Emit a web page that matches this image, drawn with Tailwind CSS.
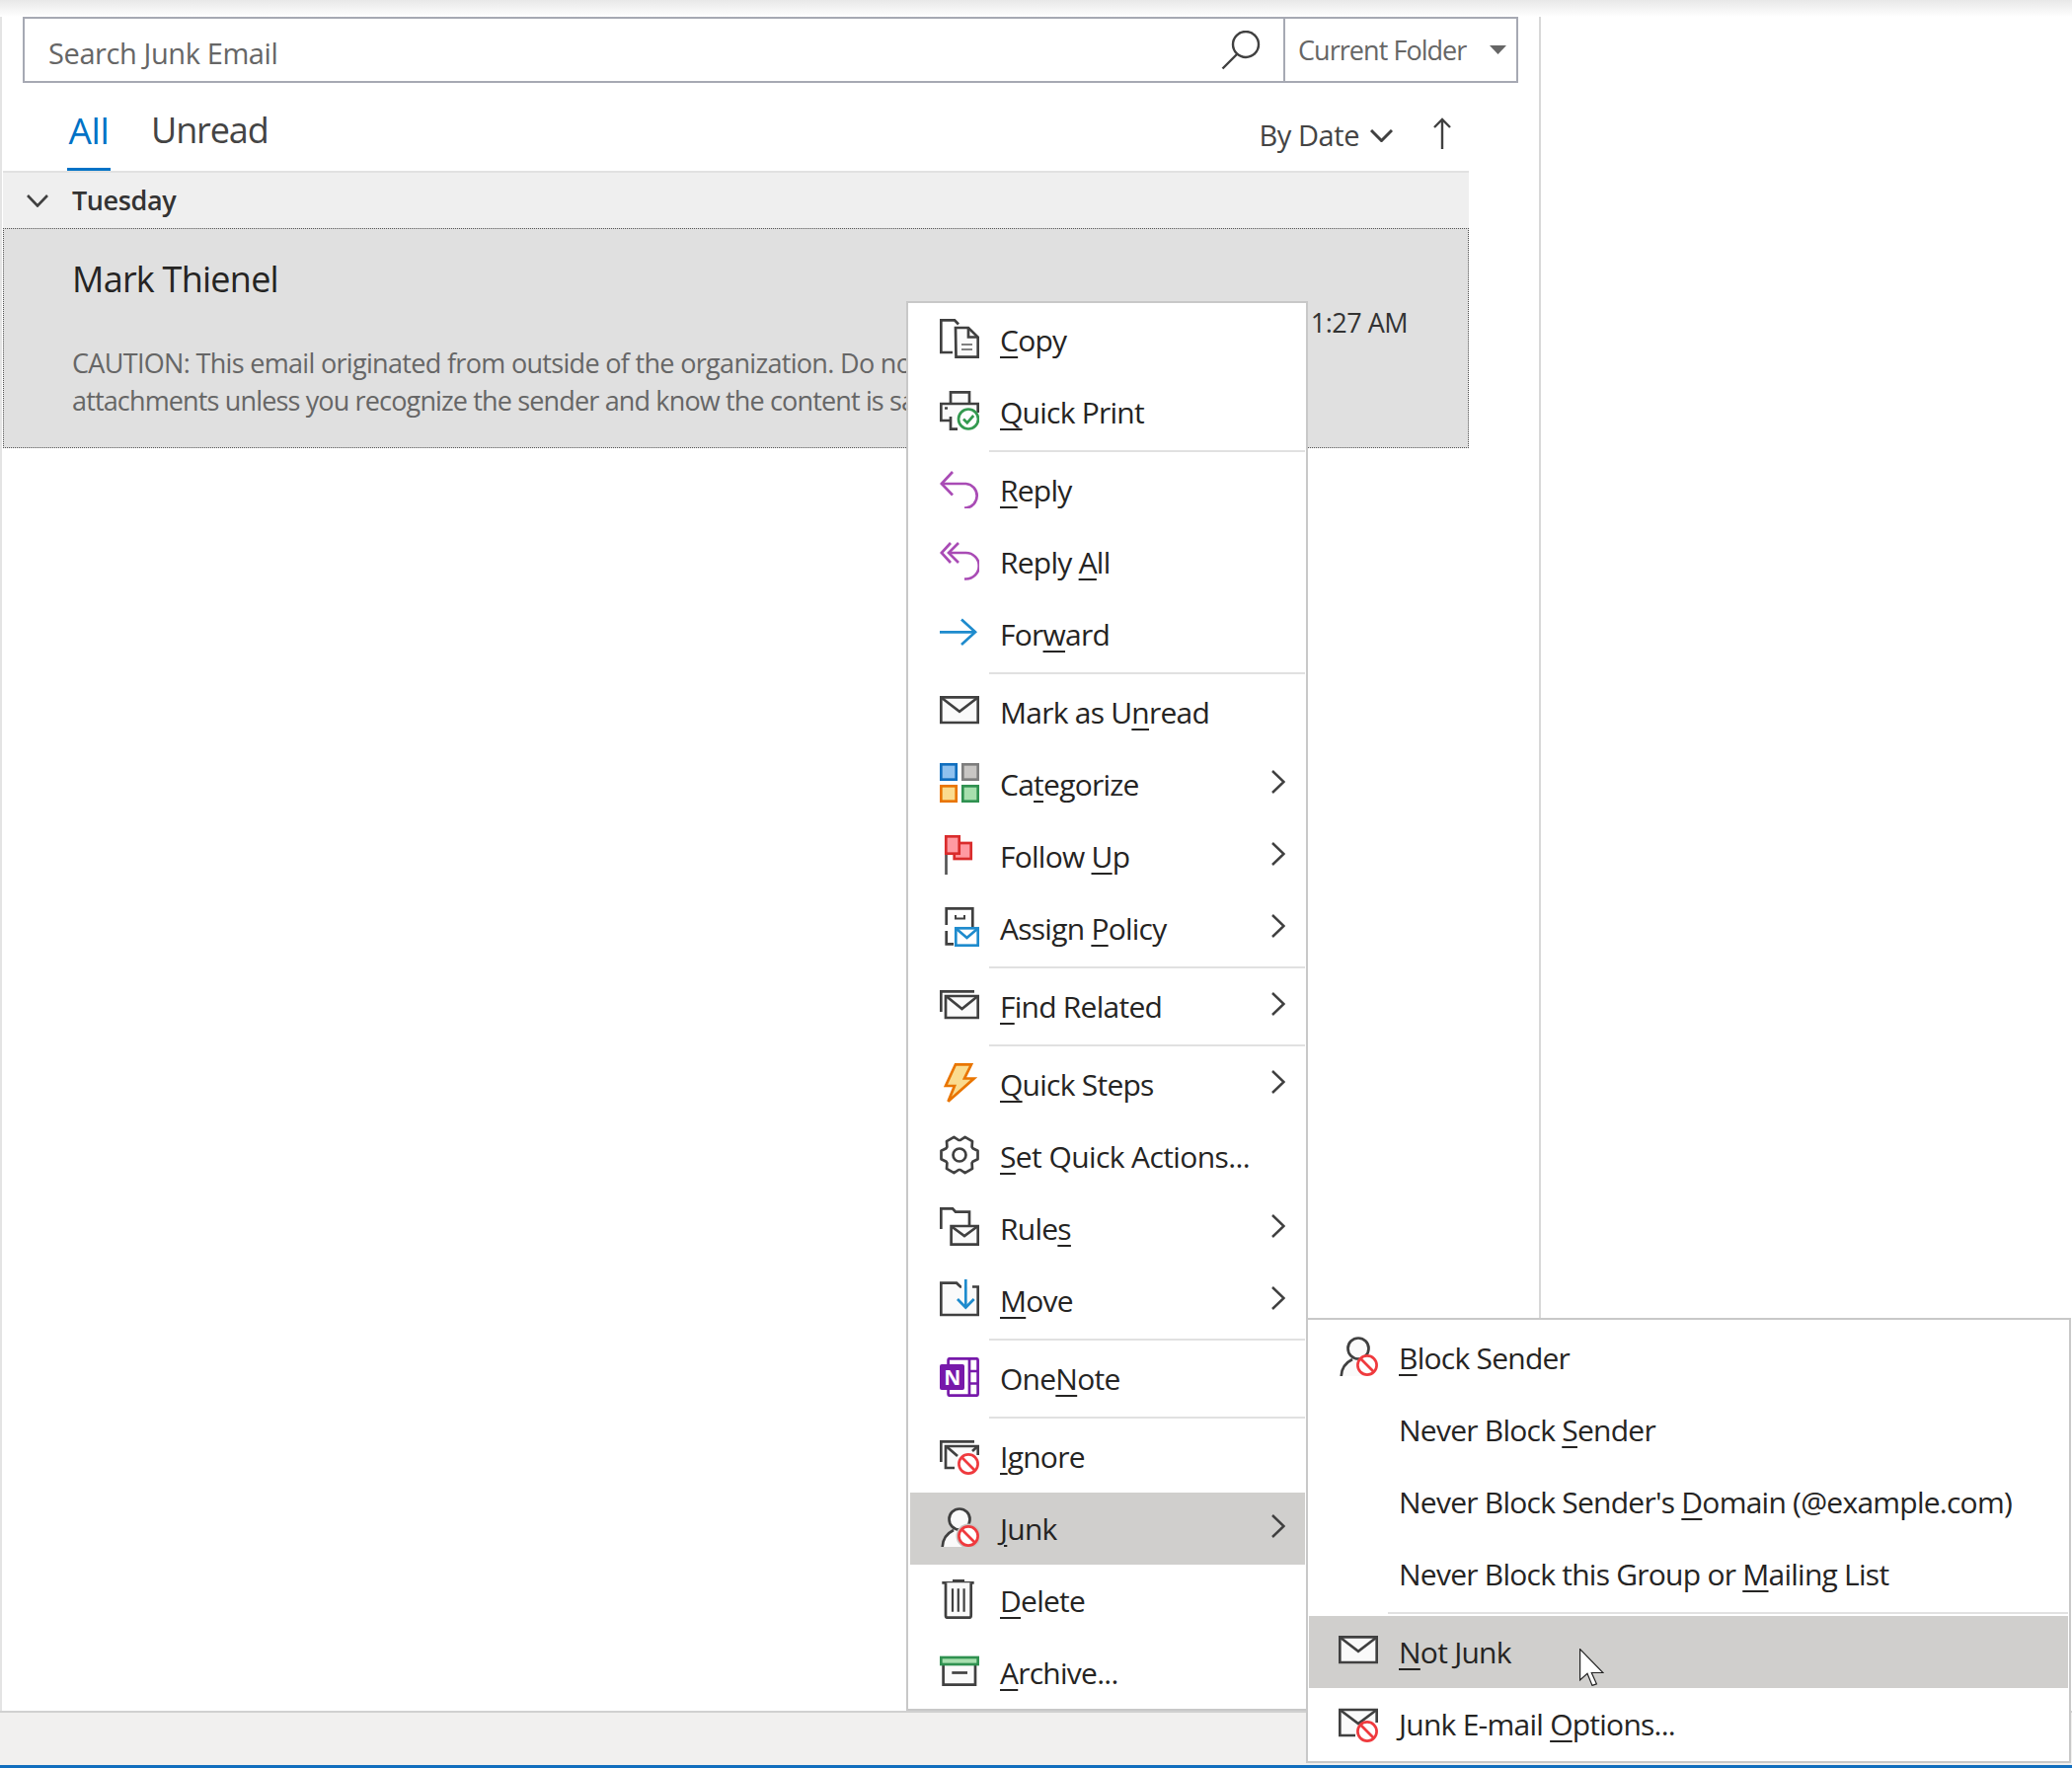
<!DOCTYPE html>
<html lang="en">

<head>
    <meta charset="UTF-8">
    <title>Junk Email</title>
    <script src="https://cdn.jsdelivr.net/npm/@tailwindcss/browser@4"></script>
</head>

<body class="relative w-[2099px] h-[1791px] overflow-hidden bg-white flex flex-col font-['Open_Sans',sans-serif] text-[#252423]">

    <!-- top shadow -->
    <div class="h-[17px] shrink-0 bg-gradient-to-b from-[#e8e8e8] to-white"></div>

    <!-- list pane -->
    <div class="flex-1 min-h-0 w-[1561px] border-l-2 border-r-2 border-l-[#e4e4e4] border-r-[#d8d8d8]">

        <!-- search -->
        <div class="ml-[21px] w-[1515px] h-[67px] flex border-2 border-[#a6a9b3]">
            <div class="flex-1 flex items-center pl-[24px] pr-[23px]">
                <span class="text-[29px] text-[#666666] tracking-[-0.4px] pt-[6px]">Search Junk Email</span>
                <svg class="ml-auto w-10 h-10" viewBox="0 0 40 40" fill="none" stroke="#404040" stroke-width="2.4"><circle cx="25" cy="14" r="13"/><path d="M16 24L1.5 38.5"/></svg>
            </div>
            <div class="w-[236px] flex items-center border-l-2 border-[#a6a9b3] pl-[13px] text-[#666666]">
                <span class="text-[27px] tracking-[-0.95px] pt-[2px]">Current Folder</span>
                <svg class="ml-auto mr-[10px] w-[17px] h-[9px]" viewBox="0 0 17 9"><path d="M0 0H17L8.5 9Z" fill="#666666"/></svg>
            </div>
        </div>

        <!-- tabs -->
        <div class="h-[89px] w-[1485px] flex pl-[66px] pr-[16px]">
            <div class="w-[44px] flex flex-col items-center border-b-[3px] border-[#0072c6] text-[#0072c6]">
                <span class="text-[37px] leading-[50px] pt-[23px] tracking-[-0.4px]">All</span>
            </div>
            <span class="ml-[41px] text-[36px] leading-[50px] pt-[23px] text-[#444444] tracking-[-1.1px]">Unread</span>
            <div class="ml-auto flex items-center pt-[16px] text-[#444444]">
                <span class="text-[29px] tracking-[-0.45px]">By Date</span>
                <svg class="ml-[11px] w-[23px] h-[13px] mt-[2px]" viewBox="0 0 23 13" fill="none" stroke="#404040" stroke-width="3"><path d="M1 1L11.5 11.5L22 1"/></svg>
                <svg class="ml-[40px] w-[20px] h-[32px] -mt-[3px]" viewBox="0 0 20 32" fill="none" stroke="#404040" stroke-width="2.4"><path d="M10 32V2M2 10L10 2L18 10"/></svg>
            </div>
        </div>

        <!-- message list -->
        <div class="ml-[1px] w-[1485px]">
            <div class="h-[58px] border-t-2 border-[#e1e1e1] bg-[#efefef] flex items-center">
                <svg class="ml-[24px] w-[22px] h-[13px]" viewBox="0 0 22 13" fill="none" stroke="#404040" stroke-width="2.6"><path d="M1 1L11 11.5L21 1"/></svg>
                <span class="ml-[24px] text-[27px] font-semibold tracking-[-0.4px] text-[#333333]">Tuesday</span>
            </div>
            <div class="h-[223px] border border-dotted border-[#555555] bg-[#e0e0e0] flex flex-col pl-[69px] pt-[26px]">
                <div class="text-[36px] leading-[49px] tracking-[-0.75px] text-[#252423]">Mark Thienel</div>
                <div class="text-[27px] leading-[40px] text-right pr-[61px] tracking-[-0.5px] text-[#333333]">1:27 AM</div>
                <div class="mt-[2px] text-[27px] leading-[38px] text-[#666666] whitespace-nowrap">
                    <div class="tracking-[-0.68px]">CAUTION: This email originated from outside of the organization. Do not click</div>
                    <div class="tracking-[-0.85px]">attachments unless you recognize the sender and know the content is safe.</div>
                </div>
            </div>
        </div>
    </div>

    <!-- status bar -->
    <div class="h-[55px] shrink-0 border-t-2 border-[#d0d0d0] bg-[#f1f0ef]"></div>
    <div class="h-[3px] shrink-0 bg-[#106ebe]"></div>

    <!-- context menu -->
    <div class="absolute left-[918px] top-[305px] w-[407px] h-[1428px] border-2 border-[#c8c8c8] bg-white pt-[1px] pl-[2px] pr-[1px] text-[30px] tracking-[-0.75px]">

        <div class="flex items-center h-[73px]">
            <svg class="self-start mt-[15px] ml-[30px] w-10 h-10" viewBox="0 0 40 40" fill="none" stroke="#404040" stroke-width="2.7"><path d="M13 34H1.3V1.3H15L19 5.5"/><path d="M16 9H29L38.7 18.5V38.7H16.5Z" fill="#fafafa"/><path d="M29 9V18.5H38.7"/><path d="M22 26H33M22 31H33" stroke="#808080" stroke-width="2"/></svg>
            <span class="ml-[21px]"><u class="underline decoration-2 underline-offset-[5px]">C</u>opy</span>
        </div>
        <div class="flex items-center h-[73px]">
            <svg class="self-start mt-[15px] ml-[30px] w-10 h-10" viewBox="0 0 40 40" fill="none" stroke="#404040" stroke-width="2.7"><path d="M11 13V1.3H30V13" fill="#fafafa"/><path d="M10 30H1.3V13H38.7V22" fill="#fafafa"/><path d="M11 26V38.7H18"/><path d="M5 17.5H8" stroke-width="2.4"/><circle cx="29" cy="28.5" r="10" fill="#fff" stroke="#339a4f"/><path d="M24 28.5L27.8 32.3L34.2 25" stroke="#339a4f"/></svg>
            <span class="ml-[21px]"><u class="underline decoration-2 underline-offset-[5px]">Q</u>uick Print</span>
        </div>
        <div class="h-[6px] flex items-center pl-[80px]"><div class="h-[2px] w-full bg-[#e1e1e1]"></div></div>

        <div class="flex items-center h-[73px]">
            <svg class="self-start mt-[15px] ml-[30px] w-10 h-10" viewBox="0 0 40 40" fill="none" stroke="#a94bb5" stroke-width="2.7"><path d="M13 3L1.8 15L13 26.5"/><path d="M1.8 15H26.5A12.3 12.3 0 0 1 26.5 39.5H25"/></svg>
            <span class="ml-[21px]"><u class="underline decoration-2 underline-offset-[5px]">R</u>eply</span>
        </div>
        <div class="flex items-center h-[73px]">
            <svg class="self-start mt-[15px] ml-[30px] w-10 h-10" viewBox="0 0 40 40" fill="none" stroke="#a94bb5" stroke-width="2.7"><path d="M11 2L1.8 12L11 22"/><path d="M19 2L9 12L19 22"/><path d="M9 12H26.5A13 13 0 0 1 26.5 38.5H25"/></svg>
            <span class="ml-[21px]">Reply <u class="underline decoration-2 underline-offset-[5px]">A</u>ll</span>
        </div>
        <div class="flex items-center h-[73px]">
            <svg class="self-start mt-[15px] ml-[30px] w-10 h-10" viewBox="0 0 40 40" fill="none" stroke="#1e8bcd" stroke-width="2.7"><path d="M0 19.3H36"/><path d="M22 6.5L36 19.3L22 32"/></svg>
            <span class="ml-[21px]">For<u class="underline decoration-2 underline-offset-[5px]">w</u>ard</span>
        </div>
        <div class="h-[6px] flex items-center pl-[80px]"><div class="h-[2px] w-full bg-[#e1e1e1]"></div></div>

        <div class="flex items-center h-[73px]">
            <svg class="self-start mt-[15px] ml-[30px] w-10 h-10" viewBox="0 0 40 40" fill="none" stroke="#404040" stroke-width="2.7"><path d="M1.3 6.3H38.7V32H1.3Z" fill="#fafafa"/><path d="M2 7L20 20.7L38 7"/></svg>
            <span class="ml-[21px]">Mark as U<u class="underline decoration-2 underline-offset-[5px]">n</u>read</span>
        </div>
        <div class="flex items-center h-[73px]">
            <svg class="self-start mt-[15px] ml-[30px] w-10 h-10" viewBox="0 0 40 40" stroke-width="2.7"><rect x="1.3" y="1.3" width="15.4" height="15.4" fill="#8fc1ee" stroke="#106ebe"/><rect x="23.3" y="1.3" width="15.4" height="15.4" fill="#c8c6c4" stroke="#7d7d7d"/><rect x="1.3" y="23.3" width="15.4" height="15.4" fill="#fadb8f" stroke="#e97500"/><rect x="23.3" y="23.3" width="15.4" height="15.4" fill="#a7dfae" stroke="#2f9150"/></svg>
            <span class="ml-[21px]">Ca<u class="underline decoration-2 underline-offset-[5px]">t</u>egorize</span>
            <svg class="ml-auto mr-[20px] -mt-[6px] w-[14px] h-[24px]" viewBox="0 0 14 24" fill="none" stroke="#404040" stroke-width="2.5"><path d="M1 1L12.5 12L1 23"/></svg>
        </div>
        <div class="flex items-center h-[73px]">
            <svg class="self-start mt-[15px] ml-[30px] w-10 h-10" viewBox="0 0 40 40" fill="none" stroke-width="2.7"><path d="M6.5 19V40" stroke="#555555"/><rect x="14.7" y="8" width="17" height="16" fill="#ff9aa2" stroke="#d92c2c"/><rect x="6.3" y="1.3" width="13.4" height="17.4" fill="#ff9aa2" stroke="#d92c2c"/></svg>
            <span class="ml-[21px]">Follow <u class="underline decoration-2 underline-offset-[5px]">U</u>p</span>
            <svg class="ml-auto mr-[20px] -mt-[6px] w-[14px] h-[24px]" viewBox="0 0 14 24" fill="none" stroke="#404040" stroke-width="2.5"><path d="M1 1L12.5 12L1 23"/></svg>
        </div>
        <div class="flex items-center h-[73px]">
            <svg class="self-start mt-[15px] ml-[30px] w-10 h-10" viewBox="0 0 40 40" fill="none" stroke="#404040" stroke-width="2.7"><path d="M6.7 18V1.3H33.3V20"/><path d="M6.7 24V37.3H14"/><path d="M16 8V11.5H25V8" stroke-width="2"/><rect x="16.3" y="21.3" width="22.4" height="17.4" fill="#fff" stroke="#1e8bcd"/><path d="M17 22L27.5 31L38 22" stroke="#1e8bcd"/></svg>
            <span class="ml-[21px]">Assign <u class="underline decoration-2 underline-offset-[5px]">P</u>olicy</span>
            <svg class="ml-auto mr-[20px] -mt-[6px] w-[14px] h-[24px]" viewBox="0 0 14 24" fill="none" stroke="#404040" stroke-width="2.5"><path d="M1 1L12.5 12L1 23"/></svg>
        </div>
        <div class="h-[6px] flex items-center pl-[80px]"><div class="h-[2px] w-full bg-[#e1e1e1]"></div></div>

        <div class="flex items-center h-[73px]">
            <svg class="self-start mt-[15px] ml-[30px] w-10 h-10" viewBox="0 0 40 40" fill="none" stroke="#404040" stroke-width="2.7"><path d="M1.3 27V6.3H35"/><path d="M6 11H38.7V33H6Z" fill="#fafafa"/><path d="M7 11.5L22.5 24L38 11.5"/></svg>
            <span class="ml-[21px]"><u class="underline decoration-2 underline-offset-[5px]">F</u>ind Related</span>
            <svg class="ml-auto mr-[20px] -mt-[6px] w-[14px] h-[24px]" viewBox="0 0 14 24" fill="none" stroke="#404040" stroke-width="2.5"><path d="M1 1L12.5 12L1 23"/></svg>
        </div>
        <div class="h-[6px] flex items-center pl-[80px]"><div class="h-[2px] w-full bg-[#e1e1e1]"></div></div>

        <div class="flex items-center h-[73px]">
            <svg class="self-start mt-[15px] ml-[30px] w-10 h-10" viewBox="0 0 40 40" fill="#fadb8f" stroke="#e97500" stroke-width="2.7"><path d="M16 1.3H32L25 15.5H34.7L8.5 38.7L15 23H6Z"/></svg>
            <span class="ml-[21px]"><u class="underline decoration-2 underline-offset-[5px]">Q</u>uick Steps</span>
            <svg class="ml-auto mr-[20px] -mt-[6px] w-[14px] h-[24px]" viewBox="0 0 14 24" fill="none" stroke="#404040" stroke-width="2.5"><path d="M1 1L12.5 12L1 23"/></svg>
        </div>
        <div class="flex items-center h-[73px]">
            <svg class="self-start mt-[15px] ml-[30px] w-10 h-10" viewBox="0 0 40 40" fill="none" stroke="#404040" stroke-width="2.7" stroke-linejoin="round"><path d="M38.5 15.7L38.5 24.3L33.4 26.8L32.6 28.2L33 33.9L25.6 38.2L20.8 35L19.2 35L14.4 38.2L7 33.9L7.4 28.2L6.6 26.8L1.5 24.3L1.5 15.7L6.6 13.2L7.4 11.8L7 6.1L14.4 1.8L19.2 5L20.8 5L25.6 1.8L33 6.1L32.6 11.8L33.4 13.2Z"/><circle cx="20" cy="20" r="6.5"/></svg>
            <span class="ml-[21px] tracking-[-0.6px]"><u class="underline decoration-2 underline-offset-[5px]">S</u>et Quick Actions...</span>
        </div>
        <div class="flex items-center h-[73px]">
            <svg class="self-start mt-[15px] ml-[30px] w-10 h-10" viewBox="0 0 40 40" fill="none" stroke="#404040" stroke-width="2.7"><path d="M1.3 22V1.3H13L16 4.7H30V18"/><path d="M11.6 19H38.7V37.7H11.6Z" fill="#fafafa"/><path d="M12 19.5L25 29L38 19.5"/></svg>
            <span class="ml-[21px]">Rule<u class="underline decoration-2 underline-offset-[5px]">s</u></span>
            <svg class="ml-auto mr-[20px] -mt-[6px] w-[14px] h-[24px]" viewBox="0 0 14 24" fill="none" stroke="#404040" stroke-width="2.5"><path d="M1 1L12.5 12L1 23"/></svg>
        </div>
        <div class="flex items-center h-[73px]">
            <svg class="self-start mt-[15px] ml-[30px] w-10 h-10" viewBox="0 0 40 40" fill="none" stroke="#404040" stroke-width="2.7"><path d="M22 7.5H21L17 3.7H1.3V36H38.7V7.5H33" fill="#fafafa"/><path d="M26.3 0V28.5" stroke="#1e8bcd"/><path d="M18 20L26.3 28.5L34.7 20" stroke="#1e8bcd"/></svg>
            <span class="ml-[21px]"><u class="underline decoration-2 underline-offset-[5px]">M</u>ove</span>
            <svg class="ml-auto mr-[20px] -mt-[6px] w-[14px] h-[24px]" viewBox="0 0 14 24" fill="none" stroke="#404040" stroke-width="2.5"><path d="M1 1L12.5 12L1 23"/></svg>
        </div>
        <div class="h-[6px] flex items-center pl-[80px]"><div class="h-[2px] w-full bg-[#e1e1e1]"></div></div>

        <div class="flex items-center h-[73px]">
            <svg class="self-start mt-[15px] ml-[30px] w-10 h-10" viewBox="0 0 40 40" fill="none" stroke="#7719aa" stroke-width="2.7"><rect x="8.6" y="1.3" width="30" height="37.4" rx="1.5" fill="#fff"/><path d="M30 1.3V38.7M30 14H38.7M30 26.5H38.7"/><rect x="0" y="7" width="25" height="26" rx="2" fill="#7719aa" stroke="none"/><text x="12.5" y="27.5" text-anchor="middle" font-family="Open Sans" font-weight="700" font-size="21" fill="#fff" stroke="none">N</text></svg>
            <span class="ml-[21px]">One<u class="underline decoration-2 underline-offset-[5px]">N</u>ote</span>
        </div>
        <div class="h-[6px] flex items-center pl-[80px]"><div class="h-[2px] w-full bg-[#e1e1e1]"></div></div>

        <div class="flex items-center h-[73px]">
            <svg class="self-start mt-[15px] ml-[30px] w-10 h-10" viewBox="0 0 40 40" fill="none" stroke="#404040" stroke-width="2.7"><path d="M1.3 27V6.3H35"/><path d="M15 33H6V11H38.7V20" fill="#fafafa"/><path d="M7 11.5L18 21M38 11.5L33 16"/><circle cx="29" cy="29" r="9.6" fill="#fff" stroke="#ef3a3e"/><path d="M22.3 22.3L35.7 35.7" stroke="#ef3a3e"/></svg>
            <span class="ml-[21px]"><u class="underline decoration-2 underline-offset-[5px]">I</u>gnore</span>
        </div>
        <div class="flex items-center h-[73px] bg-[#d0cfcd]">
            <svg class="self-start mt-[15px] ml-[30px] w-10 h-10" viewBox="0 0 40 40" fill="none" stroke="#404040" stroke-width="2.7"><path d="M2.7 40C3 31 8 26 14 23M14 23C24 25 30 30 32 40H2.7" fill="#fafafa" stroke="none"/><path d="M2.7 40C3 31 8 26 14 23"/><circle cx="20" cy="12" r="10.5" fill="#fafafa"/><circle cx="29" cy="29" r="12.5" fill="#c8c6c4" stroke="none"/><circle cx="29" cy="29" r="9.6" fill="#fff" stroke="#ef3a3e"/><path d="M22.3 22.3L35.7 35.7" stroke="#ef3a3e"/></svg>
            <span class="ml-[21px]"><u class="underline decoration-2 underline-offset-[5px]">J</u>unk</span>
            <svg class="ml-auto mr-[20px] -mt-[6px] w-[14px] h-[24px]" viewBox="0 0 14 24" fill="none" stroke="#404040" stroke-width="2.5"><path d="M1 1L12.5 12L1 23"/></svg>
        </div>
        <div class="flex items-center h-[73px]">
            <svg class="self-start mt-[15px] ml-[30px] w-10 h-10" viewBox="0 0 40 40" fill="none" stroke="#404040" stroke-width="2.7"><path d="M2.3 3.3H34.7"/><path d="M13 1.5H25" stroke-width="3"/><path d="M6 3.3V36.5Q6 38.7 8 38.7H29.5Q31.7 38.7 31.7 36.5V3.3" fill="#fafafa"/><path d="M13 9.3V32.7M18.8 9.3V32.7M24.6 9.3V32.7" stroke-width="2.2"/></svg>
            <span class="ml-[21px]"><u class="underline decoration-2 underline-offset-[5px]">D</u>elete</span>
        </div>
        <div class="flex items-center h-[73px]">
            <svg class="self-start mt-[15px] ml-[30px] w-10 h-10" viewBox="0 0 40 40" fill="none" stroke="#404040" stroke-width="2.7"><path d="M3.6 13V33.7H36V13" fill="#fafafa"/><rect x="1.3" y="6" width="37.4" height="7" fill="#a7dfae" stroke="#2f9150"/><path d="M12.3 21.5H28"/></svg>
            <span class="ml-[21px]"><u class="underline decoration-2 underline-offset-[5px]">A</u>rchive...</span>
        </div>
    </div>

    <!-- junk submenu -->
    <div class="absolute left-[1323px] top-[1335px] w-[775px] h-[451px] border-2 border-[#c8c8c8] bg-white pt-[2px] pl-[1px] pr-[1px] text-[30px] tracking-[-0.75px]">
        <div class="flex items-center h-[73px]">
            <svg class="self-start mt-[15px] ml-[30px] w-10 h-10" viewBox="0 0 40 40" fill="none" stroke="#404040" stroke-width="2.7"><path d="M2.7 40C3 31 8 26 14 23M14 23C24 25 30 30 32 40H2.7" fill="#fafafa" stroke="none"/><path d="M2.7 40C3 31 8 26 14 23"/><circle cx="20" cy="12" r="10.5" fill="#fafafa"/><circle cx="29" cy="29" r="9.6" fill="#fff" stroke="#ef3a3e"/><path d="M22.3 22.3L35.7 35.7" stroke="#ef3a3e"/></svg>
            <span class="ml-[21px]"><u class="underline decoration-2 underline-offset-[5px]">B</u>lock Sender</span>
        </div>
        <div class="flex items-center h-[73px] pl-[91px]">
            <span>Never Block <u class="underline decoration-2 underline-offset-[5px]">S</u>ender</span>
        </div>
        <div class="flex items-center h-[73px] pl-[91px]">
            <span>Never Block Sender's <u class="underline decoration-2 underline-offset-[5px]">D</u>omain (@example.com)</span>
        </div>
        <div class="flex items-center h-[73px] pl-[91px]">
            <span>Never Block this Group or <u class="underline decoration-2 underline-offset-[5px]">M</u>ailing List</span>
        </div>
        <div class="h-[6px] flex items-center pl-[80px]"><div class="h-[2px] w-full bg-[#e1e1e1]"></div></div>
        <div class="flex items-center h-[73px] bg-[#d0cfcd]">
            <svg class="self-start mt-[15px] ml-[30px] w-10 h-10" viewBox="0 0 40 40" fill="none" stroke="#404040" stroke-width="2.7"><path d="M1.3 6.3H38.7V32H1.3Z" fill="#fafafa"/><path d="M2 7L20 20.7L38 7"/></svg>
            <span class="ml-[21px]"><u class="underline decoration-2 underline-offset-[5px]">N</u>ot Junk</span>
        </div>
        <div class="flex items-center h-[73px]">
            <svg class="self-start mt-[15px] ml-[30px] w-10 h-10" viewBox="0 0 40 40" fill="none" stroke="#404040" stroke-width="2.7"><path d="M17 33H1.3V7H38.7V20" fill="#fafafa"/><path d="M2 7.5L20 21L38 7.5"/><circle cx="29" cy="29" r="9.6" fill="#fff" stroke="#ef3a3e"/><path d="M22.3 22.3L35.7 35.7" stroke="#ef3a3e"/></svg>
            <span class="ml-[21px]">Junk E-mail <u class="underline decoration-2 underline-offset-[5px]">O</u>ptions...</span>
        </div>
    </div>

    <!-- mouse pointer -->
    <svg class="absolute left-[1600px] top-[1670px] w-[25px] h-[38px]" viewBox="0 0 25 38"><path d="M0.6 0.6V32L8 25.3L13 37.4L17.4 35.8L12.3 24.5H24Z" fill="#fff" stroke="#222222" stroke-width="1.2"/></svg>

</body>

</html>
